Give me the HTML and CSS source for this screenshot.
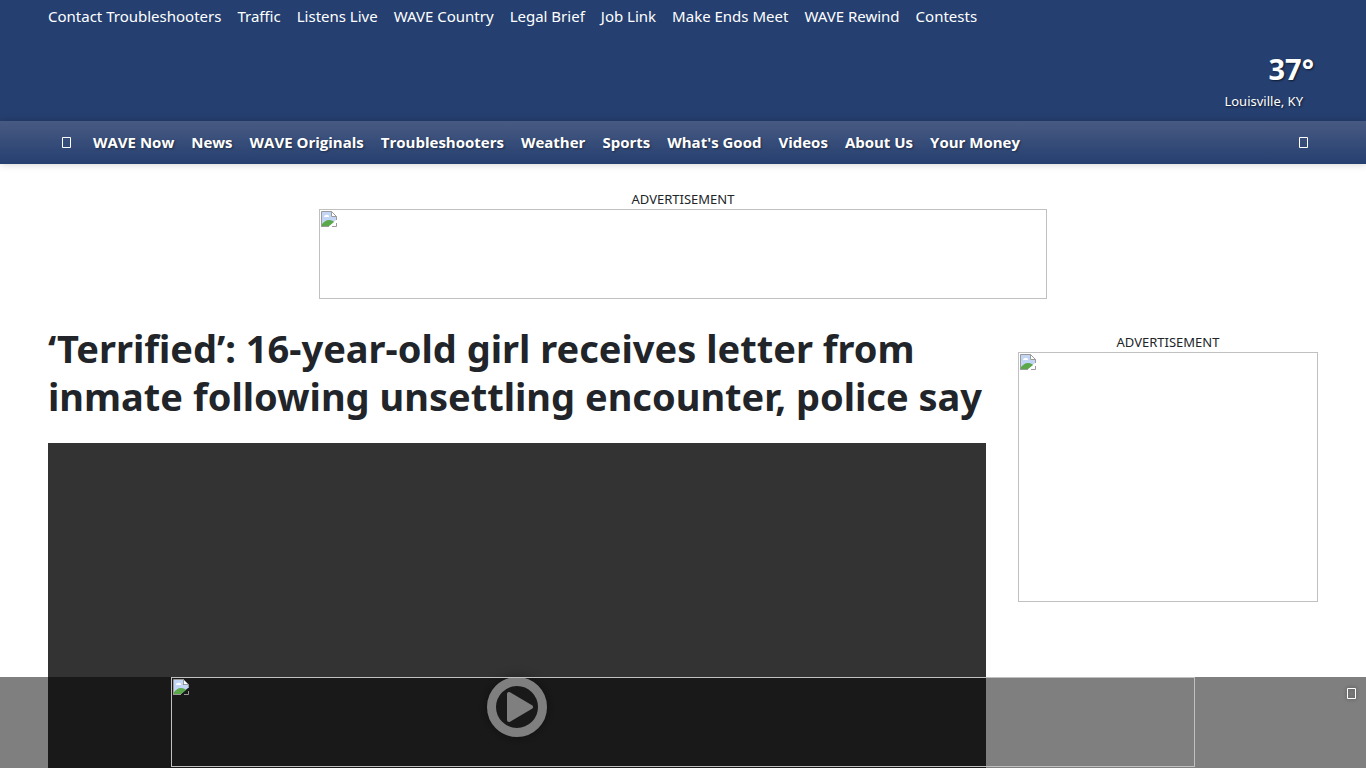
FILE: index.html
```html
<!DOCTYPE html>
<html lang="en">
<head>
  <meta charset="UTF-8" />
  <meta name="viewport" content="width=device-width, initial-scale=1.0" />
  <title>‘Terrified’: 16-year-old girl receives letter from inmate following unsettling encounter, police say</title>
  <link rel="stylesheet" href="styles.css">
</head>
<body>
  <svg class="defs" aria-hidden="true">
    <symbol id="broken" viewBox="0 0 16 16">
      <path d="M1 1h9v5h5v3l-7 6H1z" fill="#c3d5f5"/>
      <path d="M3 6a2 2 0 0 1 2-2 2 2 0 0 1 3 2z" fill="#fff"/>
      <path d="M1 15v-2c2-2 4-4 7-4 3 0 4 1 5 2l-5 4z" fill="#5aa84a"/>
      <path d="M.5 16V.5h10l5 5V9M0 15.500h8M11 15.500h4.500V12" fill="none" stroke="#9a9a9a"/>
      <path d="M10.500.5v5h5z" fill="#fff" stroke="#9a9a9a"/>
    </symbol>
    <symbol id="glyph" viewBox="0 0 9 11">
      <path d="M.5.5h8v10h-8z" fill="none" stroke="#fff"/>
    </symbol>
  </svg>

  <header>
    <div class="masthead">
      <nav class="top-links" aria-label="Quick links">
        <a href="#">Contact Troubleshooters</a>
        <a href="#">Traffic</a>
        <a href="#">Listens Live</a>
        <a href="#">WAVE Country</a>
        <a href="#">Legal Brief</a>
        <a href="#">Job Link</a>
        <a href="#">Make Ends Meet</a>
        <a href="#">WAVE Rewind</a>
        <a href="#">Contests</a>
      </nav>
      <a class="weather" href="#">
        <span class="temp">37°</span>
        <span class="city">Louisville, KY</span>
      </a>
    </div>
    <nav class="main-nav" aria-label="Main">
      <button class="icon-button" type="button" aria-label="Menu"><svg class="glyph"><use href="#glyph"/></svg></button>
      <div class="sections">
        <a href="#">WAVE Now</a>
        <a href="#">News</a>
        <a href="#">WAVE Originals</a>
        <a href="#">Troubleshooters</a>
        <a href="#">Weather</a>
        <a href="#">Sports</a>
        <a href="#">What's Good</a>
        <a href="#">Videos</a>
        <a href="#">About Us</a>
        <a href="#">Your Money</a>
      </div>
      <button class="icon-button" type="button" aria-label="Search"><svg class="glyph"><use href="#glyph"/></svg></button>
    </nav>
  </header>

  <div class="ad ad-top">
    <div class="ad-label">ADVERTISEMENT</div>
    <div class="ad-box leaderboard"><svg class="broken"><use href="#broken"/></svg></div>
  </div>

  <div class="content">
    <main>
      <h1>‘Terrified’: 16-year-old girl receives letter from inmate following unsettling encounter, police say</h1>
      <div class="video">
        <button class="play" type="button" aria-label="Play video">
          <svg viewBox="0 0 60 60">
            <circle cx="30" cy="30" r="25.500" fill="none" stroke="#fff" stroke-width="9"/>
            <path d="M22 17v26l22-13z" fill="#fff" stroke="#fff" stroke-width="4" stroke-linejoin="round"/>
          </svg>
        </button>
      </div>
    </main>
    <aside class="ad ad-side">
      <div class="ad-label">ADVERTISEMENT</div>
      <div class="ad-box rectangle"><svg class="broken"><use href="#broken"/></svg></div>
    </aside>
  </div>

  <div class="sticky-ad">
    <div class="ad-box banner"><svg class="broken"><use href="#broken"/></svg></div>
    <button class="close" type="button" aria-label="Close"><svg class="glyph"><use href="#glyph"/></svg></button>
  </div>
</body>
</html>
```
FILE: styles.css
```css
:root {
  --blue: #253f70;
  --text: #212529;
  --border: #c0c0c0;
}

* {
  box-sizing: border-box;
}

body {
  margin: 0;
  font-family: "Segoe UI", "Noto Sans", sans-serif;
  font-size: 16px;
  line-height: 24px;
  background-color: #fff;
  color: var(--text);
}

a {
  color: #fff;
  text-decoration: none;
}

button {
  padding: 0;
  border: none;
  background: none;
  cursor: pointer;
}

svg {
  display: block;
}

.defs {
  position: absolute;
  width: 0;
  height: 0;
}

.masthead {
  display: flex;
  flex-direction: column;
  justify-content: space-between;
  min-height: 121px;
  padding: 4px 48px 8px;
  background-color: var(--blue);
}

.top-links,
.sections {
  display: flex;
  gap: 16px;
  white-space: nowrap;
}

.top-links {
  font-size: 15px;
}

.weather {
  display: flex;
  flex-direction: column;
  align-self: flex-end;
  padding-right: 4px;
  text-align: right;
  text-shadow: 1px 1px 2px rgba(0, 0, 0, 0.6);
}

.temp {
  font-size: 29px;
  font-weight: 700;
  line-height: 40px;
}

.city {
  padding-right: 11px;
  font-size: 13px;
}

.main-nav {
  position: relative;
  display: flex;
  align-items: center;
  min-height: 43px;
  padding: 0 45px 0 48px;
  background: linear-gradient(#485a82, var(--blue));
  box-shadow: 0 0 8px rgba(0, 0, 0, 0.2);
}

.sections {
  flex: 1;
  gap: 17px;
  margin-left: 9px;
  padding-bottom: 2px;
  font-family: "Segoe UI", "Open Sans", sans-serif;
  font-size: 15px;
  font-weight: 700;
  text-shadow: 1px 1px 2px rgba(0, 0, 0, 0.4);
}

.icon-button {
  display: flex;
  justify-content: center;
  width: 36px;
}

.glyph {
  width: 9px;
  height: 11px;
}

.ad {
  display: flex;
  flex-direction: column;
  align-items: center;
}

.ad-top {
  padding: 25px 16px 0;
}

.ad-label {
  font-size: 13px;
  line-height: 20px;
}

.ad-box {
  max-width: 100%;
  padding: 1px;
  border: 1px solid var(--border);
}

.broken {
  width: 16px;
  height: 16px;
}

.leaderboard {
  width: 728px;
  height: 90px;
}

.rectangle {
  width: 300px;
  height: 250px;
}

.banner {
  width: 1024px;
  height: 90px;
}

.content {
  display: grid;
  grid-template-columns: minmax(0, 1fr) 300px;
  gap: 32px;
  padding: 25px 48px;
}

.ad-side {
  padding-top: 8px;
}

h1 {
  margin: 0 0 23px;
  font-size: 38px;
  line-height: 48px;
}

.video {
  display: flex;
  align-items: center;
  justify-content: center;
  aspect-ratio: 16 / 9;
  background-color: #333;
}

.play {
  width: 60px;
  height: 60px;
  border-radius: 50%;
  box-shadow: 0 0 12px rgba(0, 0, 0, 0.4);
}

.sticky-ad {
  position: fixed;
  right: 0;
  bottom: 0;
  left: 0;
  display: flex;
  justify-content: center;
  padding-bottom: 1px;
  background-color: rgba(0, 0, 0, 0.5);
}

.close {
  position: absolute;
  top: 11px;
  right: 10px;
  filter: drop-shadow(0 0 2px rgba(0, 0, 0, 0.6));
}
```
